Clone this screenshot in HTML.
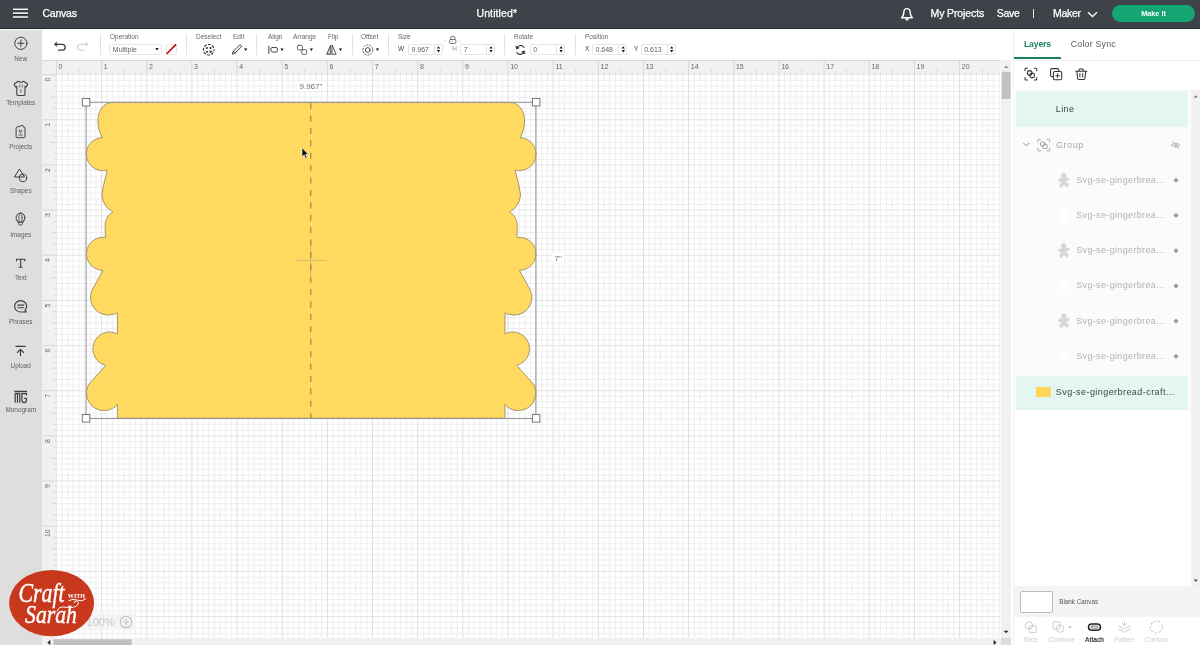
<!DOCTYPE html>
<html>
<head>
<meta charset="utf-8">
<title>Canvas</title>
<style>
*{box-sizing:border-box;margin:0;padding:0}
html,body{width:1200px;height:645px;overflow:hidden;background:#fff;font-family:"Liberation Sans",sans-serif;}
body{position:relative}
body>*{will-change:transform}
.abs{position:absolute}
#topbar{z-index:5;position:absolute;left:0;top:0;width:1200px;height:29px;background:#3e434a;color:#fff;font-size:10.500px;border-bottom:1px solid #272a2f}
#topbar .t{position:absolute;top:7px;line-height:13px;white-space:nowrap;-webkit-text-stroke:.25px #fff}
#sidebar{position:absolute;left:0;top:28px;width:41.700px;height:617px;background:#dedede}
.sb{position:absolute;left:0;width:41.500px;text-align:center;font-size:6.400px;color:#606060;line-height:8px;white-space:nowrap}
.sbi{position:absolute;left:13px;width:15px;height:15px}
#toolbar{position:absolute;left:42px;top:28px;width:971px;height:32px;background:#fff}
.tl{position:absolute;top:5px;font-size:6.5px;line-height:8px;color:#666;white-space:nowrap}
.sep{position:absolute;top:6px;width:1px;height:21px;background:#e2e2e2}
.inp{position:absolute;top:15.5px;height:11px;border:1px solid #e6e6e6;border-radius:2px;background:#fff;font-size:7px;line-height:9px;color:#5e5e5e;padding-left:2.500px;white-space:nowrap}
.lt{position:absolute;top:17px;font-size:6.5px;line-height:8px;color:#555}

.car{position:absolute;top:20.500px;width:0;height:0;border-left:1.700px solid transparent;border-right:1.700px solid transparent;border-top:2.300px solid #111}
.spl{position:absolute;right:7px;top:0;width:1px;height:100%;background:#e6e6e6}
.spu{position:absolute;right:2.300px;top:2px;width:0;height:0;border-left:1.700px solid transparent;border-right:1.700px solid transparent;border-bottom:2.200px solid #111}
.spd{position:absolute;right:2.300px;top:5.800px;width:0;height:0;border-left:1.700px solid transparent;border-right:1.700px solid transparent;border-top:2.200px solid #111}
#canvas{position:absolute;left:56px;top:74px;width:944px;height:558px;background:#fff;overflow:hidden}
#rulerT{position:absolute;left:42px;top:60px;width:958px;height:14px;background:#f1f1f1;overflow:hidden}
#rulerL{position:absolute;left:42px;top:74px;width:14px;height:558px;background:#f1f1f1;overflow:hidden}
#vscroll{position:absolute;left:1000.500px;top:60px;width:10.300px;height:578px;background:#f1f1f1}
#hscroll{position:absolute;left:42px;top:638px;width:958.500px;height:7px;background:#f1f1f1}
#panel{position:absolute;left:1013px;top:28px;width:187px;height:617px;background:#fff}
</style>
</head>
<body>
<div id="topbar">
<svg class="abs" style="left:12px;top:7.400px" width="17" height="13" viewBox="0 0 17 13"><g fill="#1c1e21"><rect x="1" y="2.6" width="15" height="1.2"/><rect x="1" y="6.4" width="15" height="1.2"/><rect x="1" y="10.3" width="15" height="1.2"/></g><g fill="#fff"><rect x="1" y="1.6" width="15" height="1.5"/><rect x="1" y="5.4" width="15" height="1.5"/><rect x="1" y="9.3" width="15" height="1.5"/></g></svg>
<span class="t" id="tcanvas" style="left:42.5px;letter-spacing:-0.23px">Canvas</span>
<span class="t" id="tuntitled" style="left:476.5px;letter-spacing:0.1px">Untitled*</span>
<svg class="abs" style="left:900px;top:7px" width="14" height="15" viewBox="900 7 14 15"><path d="M907 8.600C904.800 8.600 903.800 10.700 903.800 12.800C903.800 14.900 903 16.400 901.600 17.700H912.400C911 16.400 910.200 14.900 910.200 12.800C910.200 10.700 909.200 8.600 907 8.600z" fill="none" stroke="#fff" stroke-width="1.450" stroke-linejoin="round"/><path d="M904.800 18.400h4.400l-1.300 1.900q-.9.800-1.800 0z" fill="#fff"/></svg>
<span class="t" id="tmyp" style="left:930.5px;letter-spacing:-0.11px">My Projects</span>
<span class="t" id="tsave" style="left:996.8px;letter-spacing:-0.3px">Save</span>
<div class="abs" style="left:1032.5px;top:9px;width:1px;height:9px;background:#e6e8ea"></div>
<span class="t" id="tmaker" style="left:1053px;letter-spacing:-0.3px">Maker</span>
<svg class="abs" style="left:1087px;top:11px" width="11" height="7" viewBox="0 0 11 7"><path d="M1 1.200l4.500 4.300L10 1.200" fill="none" stroke="#fff" stroke-width="1.300"/></svg>
<div class="abs" id="makeit" style="left:1112px;top:5px;width:83px;height:17px;border-radius:9px;background:#14a672;color:#fff;font-weight:bold;font-size:7.300px;line-height:17px;text-align:center;padding-left:0">Make It</div>
</div>
<div id="sidebar"><div class="abs" style="left:0;top:1px;width:41.700px;height:2px;background:linear-gradient(#f2f2f2,#e6e6e6)"></div><svg class="abs" style="left:0;top:-28px" width="42" height="645" viewBox="0 0 42 645" fill="none" stroke="#3f3f3f" stroke-width="1" stroke-linecap="round" stroke-linejoin="round">
<circle cx="20.900" cy="43.300" r="6.100"/><path d="M17.800 43.300h6.200M20.900 40.200v6.200"/>
<path d="M18.200 81.300L14.500 83.800q-.5.400-.2.900l1.100 1.900q.3.400.7.200l.7-.4V94.300q0 1.200 1.200 1.200h5.800q1.200 0 1.200-1.200V86.400l.7.400q.4.200.7-.2l1.100-1.900q.3-.5-.2-.9L23.600 81.300q-2.700 2-5.400 0z" stroke-width="1.100"/><path d="M19.600 85v2M22.200 85v2M20.900 89.500v3" stroke-width=".7"/>
<path d="M16.100 128.200q0-1 1-1.200l5.300-1.500q.9-.2.900.800v.8h.7q1 0 1 1v8.600q0 1-1 1h-6.900q-1 0-1-1z"/><path d="M20.500 132.800q-2.300-1.500-1.300-2.500.8-.6 1.300.3.500-.9 1.300-.3 1 1-1.300 2.500zM18.800 135h3.500" stroke-width=".8"/>
<path d="M19.300 169.300L14.500 177h9.600z"/><circle cx="22.900" cy="177.900" r="3.800"/>
<ellipse cx="20.500" cy="217.700" rx="4.400" ry="4.700"/><ellipse cx="20.500" cy="217.700" rx="1.700" ry="4.700" stroke-width=".8"/><path d="M17 220.700l2.300 4.300h2.400l2.300-4.300M19.300 222.500h2.400" stroke-width=".8"/>
<path d="M16.500 261.200v-1.900h8.300v1.900M20.650 259.300v7.800M18.600 267.200h4.100" stroke-width="1.100" stroke-linecap="butt"/>
<path d="M26.600 306.300a6 5.700 0 1 0-6 5.700h5.800l-1.500-1.600a5.700 5.700 0 0 0 1.700-4.100z" stroke-width="1.100"/><path d="M17.800 305.100h5.900M17.800 307.800h5.900" stroke-width="1.100"/>
<path d="M15.900 346.400h9.300M20.500 349.600v6.200M17.400 352.500l3.100-3.100 3.100 3.100" stroke-width="1.100"/>
<path d="M14.400 391.500h12.600" stroke-width="1.500" stroke-linecap="butt"/><path d="M15.200 402.800V393.700h4.600V402.800M17.500 393.700v9.100" stroke-width="1.200" stroke-linecap="butt"/><path d="M26.500 395.600v-1.900h-4.600V399.800a2.300 2.900 0 0 0 4.600 0V398.300h-2.300" stroke-width="1.200" stroke-linecap="butt"/>
</svg><div class="sb" style="top:26.9px">New</div><div class="sb" style="top:70.9px">Templates</div><div class="sb" style="top:114.8px">Projects</div><div class="sb" style="top:158.7px">Shapes</div><div class="sb" style="top:202.6px">Images</div><div class="sb" style="top:246.4px">Text</div><div class="sb" style="top:290.3px">Phrases</div><div class="sb" style="top:334.2px">Upload</div><div class="sb" style="top:378.1px">Monogram</div></div>
<div id="toolbar"><div class="sep" style="left:57.6px"></div><span class="tl" style="left:68.0px">Operation</span><div class="inp" style="left:67.3px;width:53px">Multiple</div><div class="inp" style="left:123.6px;width:11.400px;padding:0"></div><div class="sep" style="left:144.0px"></div><span class="tl" style="left:154.0px">Deselect</span><span class="tl" style="left:191.0px">Edit</span><div class="sep" style="left:214.4px"></div><span class="tl" style="left:226.0px">Align</span><span class="tl" style="left:251.0px">Arrange</span><span class="tl" style="left:286.0px">Flip</span><div class="sep" style="left:309.7px"></div><span class="tl" style="left:319.0px">Offset</span><div class="sep" style="left:346.0px"></div><span class="tl" style="left:356.0px">Size</span><span class="lt" style="left:356.0px;color:#444">W</span><div class="inp" style="left:366.0px;width:34.7px">9.967<i class="spl"></i></div><span class="lt" style="left:410.2px;color:#9a9a9a">H</span><div class="inp" style="left:418.2px;width:35.0px">7<i class="spl"></i></div><div class="sep" style="left:462.4px"></div><span class="tl" style="left:472.0px">Rotate</span><div class="inp" style="left:487.8px;width:35.7px">0<i class="spl"></i></div><div class="sep" style="left:533.0px"></div><span class="tl" style="left:543.0px">Position</span><span class="lt" style="left:543.0px;color:#444">X</span><div class="inp" style="left:550.0px;width:35.3px">0.648<i class="spl"></i></div><span class="lt" style="left:592.0px;color:#444">Y</span><div class="inp" style="left:598.7px;width:35.0px">0.613<i class="spl"></i></div><svg class="abs" style="left:0;top:0" width="971" height="32" viewBox="42 28 971 32" fill="none" stroke-linecap="round" stroke-linejoin="round">
<g stroke="#3c3c3c" stroke-width="1.250"><path d="M56 44.300h6.300a2.900 2.900 0 0 1 0 5.800h-4.300" stroke-linecap="butt"/><path d="M56.700 42l-2.700 2.300 2.700 2.300z" fill="#3c3c3c" stroke-width=".3"/></g>
<g stroke="#d6d6d6" stroke-width="1.250"><path d="M86.600 44.300h-6.300a2.900 2.900 0 0 0 0 5.800h4.300" stroke-linecap="butt"/><path d="M85.900 42l2.700 2.300-2.700 2.300z" fill="#d6d6d6" stroke-width=".3"/></g>
<path d="M167 53.500l8.600-8.600" stroke="#c30d12" stroke-width="1.700"/>
<g stroke="#2b2b2b">
<circle cx="208.700" cy="49.700" r="5.300" stroke-width="1.050" stroke-dasharray="2.100 2.060" stroke-dashoffset="1"/>
<g fill="#2b2b2b" stroke="none"><circle cx="206.900" cy="48" r="1.050"/><circle cx="210.500" cy="48" r="1.050"/><circle cx="206.900" cy="51.700" r="1.050"/><path d="M209.700 50.300l3 1.500-3 1.500z"/></g>
<path d="M232.500 53.800l.8-2.600 6.200-6q1-.6 1.700.2.700.9-.1 1.700l-6.200 6zM233.300 51.200l1.600 1.800" stroke-width=".9"/>
<path d="M268.800 46.200v7.400" stroke-width="1" stroke="#444"/><rect x="270.900" y="47.500" width="6.500" height="4.500" rx="1.400" stroke-width="1" stroke="#444"/>
<rect x="297.500" y="45.300" width="4.800" height="4.600" rx=".9" stroke-width=".9" stroke="#555"/><rect x="301.800" y="49.700" width="4.800" height="4.600" rx=".9" stroke-width=".9" stroke="#555"/>
<path d="M330.500 45.400l-3.800 8.900h3.800z" stroke-width=".9" stroke="#444" fill="#c9c9c9"/><path d="M332.300 45.400l3.800 8.900h-3.800z" stroke-width=".9" stroke="#444"/>
<circle cx="367.800" cy="50" r="2.400" stroke-width=".95" stroke="#444"/><circle cx="367.800" cy="50" r="5" stroke-width=".9" stroke="#555" stroke-dasharray="1.300 1.840"/>
<path d="M450.400 39.500v-1a2.300 2.300 0 0 1 4.600 0v1" stroke="#666" stroke-width=".9"/><rect x="449.600" y="39.500" width="6.200" height="4" rx="1" stroke="#666" stroke-width=".9" fill="#fff"/><circle cx="452.700" cy="41.500" r=".5" fill="#666" stroke="none"/>
<path d="M443.300 41h3.500M458.300 40.900h1.200q1 0 1 1v1.300" stroke="#ddd" stroke-width=".8"/>
<path d="M516.500 48.600a4.100 4.100 0 0 1 7.500-1.200M524.300 51.200a4.100 4.100 0 0 1-7.500 1.200" stroke-width="1.050"/><path d="M515.800 46.300l.8 2.600 2.400-.9zM525 53.500l-.8-2.600-2.400.9z" fill="#2b2b2b" stroke-width=".5"/>
</g><path d="M244.05 48.5h3.3L245.70 50.9zM280.35 48.5h3.3L282.00 50.9zM309.75 48.5h3.3L311.40 50.9zM338.85 48.5h3.3L340.50 50.9zM375.85 48.5h3.3L377.50 50.9zM155.35 48h3.3L157.00 50.4zM436.85 48.5h3.3L438.50 46.2zM436.85 50.1h3.3L438.50 52.4zM489.35 48.5h3.3L491.00 46.2zM489.35 50.1h3.3L491.00 52.4zM559.45 48.5h3.3L561.10 46.2zM559.45 50.1h3.3L561.10 52.4zM621.65 48.5h3.3L623.30 46.2zM621.65 50.1h3.3L623.30 52.4zM670.05 48.5h3.3L671.70 46.2zM670.05 50.1h3.3L671.70 52.4z" fill="#111" stroke="none"/></svg></div>
<svg id="grid" class="abs" style="left:56px;top:74px" width="944.500" height="564.200" viewBox="56 74 944.500 564.200"><path d="M62.05 74.6V638.2M67.69 74.6V638.2M73.33 74.6V638.2M78.98 74.6V638.2M84.62 74.6V638.2M90.27 74.6V638.2M95.91 74.6V638.2M107.20 74.6V638.2M112.85 74.6V638.2M118.50 74.6V638.2M124.14 74.6V638.2M129.78 74.6V638.2M135.43 74.6V638.2M141.07 74.6V638.2M152.36 74.6V638.2M158.01 74.6V638.2M163.66 74.6V638.2M169.30 74.6V638.2M174.94 74.6V638.2M180.59 74.6V638.2M186.23 74.6V638.2M197.53 74.6V638.2M203.17 74.6V638.2M208.81 74.6V638.2M214.46 74.6V638.2M220.10 74.6V638.2M225.75 74.6V638.2M231.39 74.6V638.2M242.69 74.6V638.2M248.33 74.6V638.2M253.97 74.6V638.2M259.62 74.6V638.2M265.26 74.6V638.2M270.91 74.6V638.2M276.55 74.6V638.2M287.84 74.6V638.2M293.49 74.6V638.2M299.13 74.6V638.2M304.78 74.6V638.2M310.42 74.6V638.2M316.07 74.6V638.2M321.71 74.6V638.2M333.00 74.6V638.2M338.65 74.6V638.2M344.29 74.6V638.2M349.94 74.6V638.2M355.58 74.6V638.2M361.23 74.6V638.2M366.87 74.6V638.2M378.16 74.6V638.2M383.81 74.6V638.2M389.45 74.6V638.2M395.10 74.6V638.2M400.74 74.6V638.2M406.39 74.6V638.2M412.03 74.6V638.2M423.32 74.6V638.2M428.97 74.6V638.2M434.61 74.6V638.2M440.26 74.6V638.2M445.90 74.6V638.2M451.55 74.6V638.2M457.19 74.6V638.2M468.48 74.6V638.2M474.13 74.6V638.2M479.77 74.6V638.2M485.42 74.6V638.2M491.06 74.6V638.2M496.71 74.6V638.2M502.35 74.6V638.2M513.64 74.6V638.2M519.29 74.6V638.2M524.93 74.6V638.2M530.58 74.6V638.2M536.23 74.6V638.2M541.87 74.6V638.2M547.51 74.6V638.2M558.80 74.6V638.2M564.45 74.6V638.2M570.09 74.6V638.2M575.74 74.6V638.2M581.38 74.6V638.2M587.03 74.6V638.2M592.67 74.6V638.2M603.96 74.6V638.2M609.61 74.6V638.2M615.25 74.6V638.2M620.90 74.6V638.2M626.54 74.6V638.2M632.19 74.6V638.2M637.83 74.6V638.2M649.12 74.6V638.2M654.77 74.6V638.2M660.41 74.6V638.2M666.06 74.6V638.2M671.70 74.6V638.2M677.35 74.6V638.2M682.99 74.6V638.2M694.28 74.6V638.2M699.93 74.6V638.2M705.57 74.6V638.2M711.22 74.6V638.2M716.86 74.6V638.2M722.51 74.6V638.2M728.15 74.6V638.2M739.44 74.6V638.2M745.09 74.6V638.2M750.73 74.6V638.2M756.38 74.6V638.2M762.02 74.6V638.2M767.67 74.6V638.2M773.31 74.6V638.2M784.60 74.6V638.2M790.25 74.6V638.2M795.89 74.6V638.2M801.54 74.6V638.2M807.18 74.6V638.2M812.83 74.6V638.2M818.47 74.6V638.2M829.76 74.6V638.2M835.41 74.6V638.2M841.05 74.6V638.2M846.70 74.6V638.2M852.34 74.6V638.2M857.99 74.6V638.2M863.63 74.6V638.2M874.92 74.6V638.2M880.57 74.6V638.2M886.21 74.6V638.2M891.86 74.6V638.2M897.50 74.6V638.2M903.15 74.6V638.2M908.79 74.6V638.2M920.08 74.6V638.2M925.73 74.6V638.2M931.37 74.6V638.2M937.02 74.6V638.2M942.66 74.6V638.2M948.31 74.6V638.2M953.95 74.6V638.2M965.24 74.6V638.2M970.89 74.6V638.2M976.53 74.6V638.2M982.18 74.6V638.2M987.82 74.6V638.2M993.47 74.6V638.2M999.11 74.6V638.2M56.4 80.24H1000.5M56.4 85.89H1000.5M56.4 91.53H1000.5M56.4 97.18H1000.5M56.4 102.82H1000.5M56.4 108.47H1000.5M56.4 114.11H1000.5M56.4 125.40H1000.5M56.4 131.05H1000.5M56.4 136.69H1000.5M56.4 142.34H1000.5M56.4 147.98H1000.5M56.4 153.63H1000.5M56.4 159.27H1000.5M56.4 170.56H1000.5M56.4 176.21H1000.5M56.4 181.85H1000.5M56.4 187.50H1000.5M56.4 193.14H1000.5M56.4 198.79H1000.5M56.4 204.43H1000.5M56.4 215.72H1000.5M56.4 221.37H1000.5M56.4 227.01H1000.5M56.4 232.66H1000.5M56.4 238.30H1000.5M56.4 243.95H1000.5M56.4 249.59H1000.5M56.4 260.88H1000.5M56.4 266.53H1000.5M56.4 272.17H1000.5M56.4 277.82H1000.5M56.4 283.46H1000.5M56.4 289.11H1000.5M56.4 294.75H1000.5M56.4 306.04H1000.5M56.4 311.69H1000.5M56.4 317.33H1000.5M56.4 322.98H1000.5M56.4 328.62H1000.5M56.4 334.27H1000.5M56.4 339.91H1000.5M56.4 351.20H1000.5M56.4 356.85H1000.5M56.4 362.50H1000.5M56.4 368.14H1000.5M56.4 373.78H1000.5M56.4 379.43H1000.5M56.4 385.07H1000.5M56.4 396.37H1000.5M56.4 402.01H1000.5M56.4 407.65H1000.5M56.4 413.30H1000.5M56.4 418.94H1000.5M56.4 424.59H1000.5M56.4 430.24H1000.5M56.4 441.52H1000.5M56.4 447.17H1000.5M56.4 452.81H1000.5M56.4 458.46H1000.5M56.4 464.11H1000.5M56.4 469.75H1000.5M56.4 475.39H1000.5M56.4 486.68H1000.5M56.4 492.33H1000.5M56.4 497.97H1000.5M56.4 503.62H1000.5M56.4 509.26H1000.5M56.4 514.91H1000.5M56.4 520.55H1000.5M56.4 531.84H1000.5M56.4 537.49H1000.5M56.4 543.13H1000.5M56.4 548.78H1000.5M56.4 554.42H1000.5M56.4 560.07H1000.5M56.4 565.71H1000.5M56.4 577.00H1000.5M56.4 582.65H1000.5M56.4 588.29H1000.5M56.4 593.94H1000.5M56.4 599.59H1000.5M56.4 605.23H1000.5M56.4 610.88H1000.5M56.4 622.16H1000.5M56.4 627.81H1000.5M56.4 633.45H1000.5" stroke="#eeeeee" stroke-width="1" fill="none"/><path d="M56.4 74.60H1000.5M56.4 119.76H1000.5M56.4 164.92H1000.5M56.4 210.08H1000.5M56.4 255.24H1000.5M56.4 300.40H1000.5M56.4 345.56H1000.5M56.4 390.72H1000.5M56.4 435.88H1000.5M56.4 481.04H1000.5M56.4 526.20H1000.5M56.4 571.36H1000.5M56.4 616.52H1000.5" stroke="#e5e5e5" stroke-width="1" fill="none"/><path d="M56.40 74.6V638.2M101.56 74.6V638.2M146.72 74.6V638.2M191.88 74.6V638.2M237.04 74.6V638.2M282.20 74.6V638.2M327.36 74.6V638.2M372.52 74.6V638.2M417.68 74.6V638.2M462.84 74.6V638.2M508.00 74.6V638.2M553.16 74.6V638.2M598.32 74.6V638.2M643.48 74.6V638.2M688.64 74.6V638.2M733.80 74.6V638.2M778.96 74.6V638.2M824.12 74.6V638.2M869.28 74.6V638.2M914.44 74.6V638.2M959.60 74.6V638.2" stroke="#e0e0e0" stroke-width="1" fill="none"/></svg>
<svg id="rulers" class="abs" style="left:42px;top:60px" width="958.500" height="578.200" viewBox="42 60 958.500 578.200"><path d="M42 60H1000.5V74.6H56.4V638.2H42z" fill="#f1f1f1"/><path d="M42 60.400H1000.5" stroke="#d3d3d3" stroke-width="1"/><path d="M56.40 60.5V74.6M62.05 72.900V74.6M67.69 71.600V74.6M73.33 72.900V74.6M78.98 69.600V74.6M84.62 72.900V74.6M90.27 71.600V74.6M95.91 72.900V74.6M101.56 60.5V74.6M107.20 72.900V74.6M112.85 71.600V74.6M118.50 72.900V74.6M124.14 69.600V74.6M129.78 72.900V74.6M135.43 71.600V74.6M141.07 72.900V74.6M146.72 60.5V74.6M152.36 72.900V74.6M158.01 71.600V74.6M163.66 72.900V74.6M169.30 69.600V74.6M174.94 72.900V74.6M180.59 71.600V74.6M186.23 72.900V74.6M191.88 60.5V74.6M197.53 72.900V74.6M203.17 71.600V74.6M208.81 72.900V74.6M214.46 69.600V74.6M220.10 72.900V74.6M225.75 71.600V74.6M231.39 72.900V74.6M237.04 60.5V74.6M242.69 72.900V74.6M248.33 71.600V74.6M253.97 72.900V74.6M259.62 69.600V74.6M265.26 72.900V74.6M270.91 71.600V74.6M276.55 72.900V74.6M282.20 60.5V74.6M287.84 72.900V74.6M293.49 71.600V74.6M299.13 72.900V74.6M304.78 69.600V74.6M310.42 72.900V74.6M316.07 71.600V74.6M321.71 72.900V74.6M327.36 60.5V74.6M333.00 72.900V74.6M338.65 71.600V74.6M344.29 72.900V74.6M349.94 69.600V74.6M355.58 72.900V74.6M361.23 71.600V74.6M366.87 72.900V74.6M372.52 60.5V74.6M378.16 72.900V74.6M383.81 71.600V74.6M389.45 72.900V74.6M395.10 69.600V74.6M400.74 72.900V74.6M406.39 71.600V74.6M412.03 72.900V74.6M417.68 60.5V74.6M423.32 72.900V74.6M428.97 71.600V74.6M434.61 72.900V74.6M440.26 69.600V74.6M445.90 72.900V74.6M451.55 71.600V74.6M457.19 72.900V74.6M462.84 60.5V74.6M468.48 72.900V74.6M474.13 71.600V74.6M479.77 72.900V74.6M485.42 69.600V74.6M491.06 72.900V74.6M496.71 71.600V74.6M502.35 72.900V74.6M508.00 60.5V74.6M513.64 72.900V74.6M519.29 71.600V74.6M524.93 72.900V74.6M530.58 69.600V74.6M536.23 72.900V74.6M541.87 71.600V74.6M547.51 72.900V74.6M553.16 60.5V74.6M558.80 72.900V74.6M564.45 71.600V74.6M570.09 72.900V74.6M575.74 69.600V74.6M581.38 72.900V74.6M587.03 71.600V74.6M592.67 72.900V74.6M598.32 60.5V74.6M603.96 72.900V74.6M609.61 71.600V74.6M615.25 72.900V74.6M620.90 69.600V74.6M626.54 72.900V74.6M632.19 71.600V74.6M637.83 72.900V74.6M643.48 60.5V74.6M649.12 72.900V74.6M654.77 71.600V74.6M660.41 72.900V74.6M666.06 69.600V74.6M671.70 72.900V74.6M677.35 71.600V74.6M682.99 72.900V74.6M688.64 60.5V74.6M694.28 72.900V74.6M699.93 71.600V74.6M705.57 72.900V74.6M711.22 69.600V74.6M716.86 72.900V74.6M722.51 71.600V74.6M728.15 72.900V74.6M733.80 60.5V74.6M739.44 72.900V74.6M745.09 71.600V74.6M750.73 72.900V74.6M756.38 69.600V74.6M762.02 72.900V74.6M767.67 71.600V74.6M773.31 72.900V74.6M778.96 60.5V74.6M784.60 72.900V74.6M790.25 71.600V74.6M795.89 72.900V74.6M801.54 69.600V74.6M807.18 72.900V74.6M812.83 71.600V74.6M818.47 72.900V74.6M824.12 60.5V74.6M829.76 72.900V74.6M835.41 71.600V74.6M841.05 72.900V74.6M846.70 69.600V74.6M852.34 72.900V74.6M857.99 71.600V74.6M863.63 72.900V74.6M869.28 60.5V74.6M874.92 72.900V74.6M880.57 71.600V74.6M886.21 72.900V74.6M891.86 69.600V74.6M897.50 72.900V74.6M903.15 71.600V74.6M908.79 72.900V74.6M914.44 60.5V74.6M920.08 72.900V74.6M925.73 71.600V74.6M931.37 72.900V74.6M937.02 69.600V74.6M942.66 72.900V74.6M948.31 71.600V74.6M953.95 72.900V74.6M959.60 60.5V74.6M965.24 72.900V74.6M970.89 71.600V74.6M976.53 72.900V74.6M982.18 69.600V74.6M987.82 72.900V74.6M993.47 71.600V74.6M999.11 72.900V74.6M42.5 74.60H56.4M54.700 80.24H56.4M53.400 85.89H56.4M54.700 91.53H56.4M51.400 97.18H56.4M54.700 102.82H56.4M53.400 108.47H56.4M54.700 114.11H56.4M42.5 119.76H56.4M54.700 125.40H56.4M53.400 131.05H56.4M54.700 136.69H56.4M51.400 142.34H56.4M54.700 147.98H56.4M53.400 153.63H56.4M54.700 159.27H56.4M42.5 164.92H56.4M54.700 170.56H56.4M53.400 176.21H56.4M54.700 181.85H56.4M51.400 187.50H56.4M54.700 193.14H56.4M53.400 198.79H56.4M54.700 204.43H56.4M42.5 210.08H56.4M54.700 215.72H56.4M53.400 221.37H56.4M54.700 227.01H56.4M51.400 232.66H56.4M54.700 238.30H56.4M53.400 243.95H56.4M54.700 249.59H56.4M42.5 255.24H56.4M54.700 260.88H56.4M53.400 266.53H56.4M54.700 272.17H56.4M51.400 277.82H56.4M54.700 283.46H56.4M53.400 289.11H56.4M54.700 294.75H56.4M42.5 300.40H56.4M54.700 306.04H56.4M53.400 311.69H56.4M54.700 317.33H56.4M51.400 322.98H56.4M54.700 328.62H56.4M53.400 334.27H56.4M54.700 339.91H56.4M42.5 345.56H56.4M54.700 351.20H56.4M53.400 356.85H56.4M54.700 362.50H56.4M51.400 368.14H56.4M54.700 373.78H56.4M53.400 379.43H56.4M54.700 385.07H56.4M42.5 390.72H56.4M54.700 396.37H56.4M53.400 402.01H56.4M54.700 407.65H56.4M51.400 413.30H56.4M54.700 418.94H56.4M53.400 424.59H56.4M54.700 430.24H56.4M42.5 435.88H56.4M54.700 441.52H56.4M53.400 447.17H56.4M54.700 452.81H56.4M51.400 458.46H56.4M54.700 464.11H56.4M53.400 469.75H56.4M54.700 475.39H56.4M42.5 481.04H56.4M54.700 486.68H56.4M53.400 492.33H56.4M54.700 497.97H56.4M51.400 503.62H56.4M54.700 509.26H56.4M53.400 514.91H56.4M54.700 520.55H56.4M42.5 526.20H56.4M54.700 531.84H56.4M53.400 537.49H56.4M54.700 543.13H56.4M51.400 548.78H56.4M54.700 554.42H56.4M53.400 560.07H56.4M54.700 565.71H56.4M42.5 571.36H56.4M54.700 577.00H56.4M53.400 582.65H56.4M54.700 588.29H56.4M51.400 593.94H56.4M54.700 599.59H56.4M53.400 605.23H56.4M54.700 610.88H56.4M42.5 616.52H56.4M54.700 622.16H56.4M53.400 627.81H56.4M54.700 633.45H56.4" stroke="#d8d8d8" stroke-width="1" fill="none"/><g font-family="Liberation Sans, sans-serif" font-size="7" fill="#666"><text x="58.6" y="68.700">0</text><text x="103.8" y="68.700">1</text><text x="148.9" y="68.700">2</text><text x="194.1" y="68.700">3</text><text x="239.2" y="68.700">4</text><text x="284.4" y="68.700">5</text><text x="329.6" y="68.700">6</text><text x="374.7" y="68.700">7</text><text x="419.9" y="68.700">8</text><text x="465.0" y="68.700">9</text><text x="510.2" y="68.700">10</text><text x="555.4" y="68.700">11</text><text x="600.5" y="68.700">12</text><text x="645.7" y="68.700">13</text><text x="690.8" y="68.700">14</text><text x="736.0" y="68.700">15</text><text x="781.2" y="68.700">16</text><text x="826.3" y="68.700">17</text><text x="871.5" y="68.700">18</text><text x="916.6" y="68.700">19</text><text x="961.8" y="68.700">20</text><text transform="translate(50.100 81.6) rotate(-90)">0</text><text transform="translate(50.100 126.8) rotate(-90)">1</text><text transform="translate(50.100 171.9) rotate(-90)">2</text><text transform="translate(50.100 217.1) rotate(-90)">3</text><text transform="translate(50.100 262.2) rotate(-90)">4</text><text transform="translate(50.100 307.4) rotate(-90)">5</text><text transform="translate(50.100 352.6) rotate(-90)">6</text><text transform="translate(50.100 397.7) rotate(-90)">7</text><text transform="translate(50.100 442.9) rotate(-90)">8</text><text transform="translate(50.100 488.0) rotate(-90)">9</text><text transform="translate(50.100 537.1) rotate(-90)">10</text><text transform="translate(50.100 582.3) rotate(-90)">11</text><text transform="translate(50.100 627.4) rotate(-90)">12</text></g></svg>
<svg id="art" class="abs" style="left:42px;top:60px" width="958" height="572" viewBox="42 60 958 572">
<defs><path id="hf" d="M312 102.4H113 C103.5 102.4 97.9 110.5 97.9 121 C97.9 127.500 99.500 133 102.300 137.600 A16.500 16.500 0 1 0 107.200 170 L103 188 A19.200 19.200 0 0 0 112.800 211.800 C108 215 105.100 220 105.100 226 C105.100 230 105.300 234 105.500 237.500 A16.500 16.500 0 1 0 103 270.300 L91.900 290.500 A17.700 17.700 0 0 0 113.500 314.300 Q116 314.200 117.400 312.800 V333.800 A16.900 16.900 0 1 0 105.800 365.300 L88.400 384.800 A17.600 17.600 0 0 0 117.400 404.400 V418.300 H312"/></defs>
<g fill="#ffd960" stroke="none"><use href="#hf"/><use href="#hf" transform="translate(622.400 0) scale(-1 1)"/></g>
<g fill="none" stroke="#8f8460" stroke-width=".8"><use href="#hf"/><use href="#hf" transform="translate(622.400 0) scale(-1 1)"/></g>
<path d="M295.300 260.400H326.600M310.800 245V276" stroke="#c9b676" stroke-width=".8"/>
<path d="M310.800 103.100V418" stroke="#8b7b46" stroke-width="1" stroke-dasharray="6.100 6.300" fill="none"/>
<rect x="86.100" y="102.300" width="449.800" height="316.100" fill="none" stroke="#929292" stroke-width="1"/>
<g fill="#fff" stroke="#6a6a6a" stroke-width=".9"><rect x="82.300" y="98.500" width="7.500" height="7.500"/><rect x="532.400" y="98.500" width="7.500" height="7.500"/><rect x="82.300" y="414.600" width="7.500" height="7.500"/><rect x="532.400" y="414.600" width="7.500" height="7.500"/></g>
<rect x="297" y="81" width="27.500" height="10" fill="#fff" opacity=".85"/><rect x="552" y="252.500" width="12" height="10.500" fill="#fff" opacity=".85"/>
<g font-family="Liberation Sans, sans-serif" font-size="8" fill="#707070"><text x="299.500" y="88.900">9.967"</text><text x="554.500" y="260.600">7"</text></g>
<path d="M302 147.800v9.200l2.100-2 1.500 3.400 1.500-.7-1.500-3.300h2.900z" fill="#111" stroke="#fff" stroke-width=".6"/>
</svg>
<div id="vscroll"><svg class="abs" style="left:0;top:0" width="10.300" height="578" viewBox="1000.500 60 10.300 578"><path d="M1003.600 67.800l2.200-2.400 2.200 2.400z" fill="#8a8a8a"/><rect x="1001.300" y="71.700" width="8.800" height="27.200" fill="#c1c1c1"/><path d="M1003.200 630.800h4.800l-2.400 2.600z" fill="#222"/></svg></div>
<div id="hscroll"><svg class="abs" style="left:0;top:0" width="958.500" height="7" viewBox="42 638 958.500 7"><path d="M50.300 639.800v5.200l-2.900-2.300z" fill="#222"/><rect x="53.400" y="639.200" width="78.400" height="6" fill="#c1c1c1"/><path d="M993.600 639.800v5.200l2.900-2.300z" fill="#222"/></svg></div><div class="abs" style="left:1000.500px;top:638px;width:10.300px;height:7px;background:#dcdcdc"></div>
<svg id="logo" class="abs" style="left:0;top:560px" width="160" height="85" viewBox="0 560 160 85">
<rect x="56.500" y="612.800" width="79.500" height="17.400" rx="4" fill="#f4f4f4" opacity=".9"/>
<text x="86.600" y="626" font-family="Liberation Sans, sans-serif" font-size="11" fill="#c6c6c6">100%</text>
<g fill="none" stroke="#c2c2c2" stroke-width="1.200"><circle cx="126" cy="622" r="5.700"/><path d="M122.800 622h6.400M126 618.800v6.400"/></g>
<ellipse cx="51.600" cy="603.100" rx="42.500" ry="33.200" fill="#c8381c"/>
<g fill="#fff" stroke="#fff" stroke-width=".35" font-family="Liberation Serif, serif" font-style="italic">
<text transform="translate(18.500 601.800) scale(1 1.240)" font-size="21.500" textLength="46" lengthAdjust="spacingAndGlyphs">Craft</text>
<text transform="translate(25 623.300) scale(1 1.220)" font-size="21" textLength="52" lengthAdjust="spacingAndGlyphs">Sarah</text>
</g>
<text x="67.800" y="597.600" font-family="Liberation Serif, serif" font-weight="bold" font-size="6.100" fill="#fff">WITH</text>
<path d="M68.500 600.800q4.500-2.600 9-.6t8.500-1.600" fill="none" stroke="#fff" stroke-width="1"/>
<path d="M57 611.500q1.500-5.500 8-4.300q8 1.500 12-1.700q3-3.300-.5-4.300q-2.600-.3-2.200 1.900" fill="none" stroke="#fff" stroke-width=".9"/>
</svg>
<div id="panel"><div class="abs" style="left:0;top:0;width:1px;height:617px;background:#f0f0f0"></div><div class="abs" style="left:0;top:31.500px;width:187px;height:1px;background:#f0f0f0"></div><div class="abs" style="left:.8px;top:28.800px;width:47px;height:2.400px;background:#1a7f5c"></div><span class="abs" style="left:10.9px;top:10.600px;font-size:8.500px;line-height:11px;font-weight:bold;color:#1f7f60;letter-spacing:-.05px">Layers</span><span class="abs" style="left:57.8px;top:10.600px;font-size:8.800px;line-height:11px;color:#5a5a5a;letter-spacing:.2px;white-space:nowrap">Color Sync</span><div class="abs" style="left:0;top:62.4px;width:178px;height:319.7px;background:#fbfbfb;border-top:1px solid #f0f0f0"></div><div class="abs" style="left:178.2px;top:62.4px;width:9px;height:495.4px;background:#f1f1f1"></div><div class="abs" style="left:3.0px;top:64.3px;width:172.200px;height:34.300px;background:#e3f6f0"></div><div class="abs" style="left:3.0px;top:347.9px;width:172.200px;height:34.200px;background:#e3f6f0"></div><span class="abs" style="left:42.8px;top:75.900px;font-size:9px;line-height:11px;color:#444;letter-spacing:0.4px;white-space:nowrap">Line</span><span class="abs" style="left:43.0px;top:111.5px;font-size:9px;line-height:11px;color:#a8a8a8;letter-spacing:0.55px;white-space:nowrap">Group</span><span class="abs" style="left:63.2px;top:146.70px;font-size:9px;line-height:11px;color:#b2b2b2;letter-spacing:0.35px;white-space:nowrap">Svg-se-gingerbrea...</span><span class="abs" style="left:63.2px;top:181.90px;font-size:9px;line-height:11px;color:#b2b2b2;letter-spacing:0.35px;white-space:nowrap">Svg-se-gingerbrea...</span><span class="abs" style="left:63.2px;top:217.15px;font-size:9px;line-height:11px;color:#b2b2b2;letter-spacing:0.35px;white-space:nowrap">Svg-se-gingerbrea...</span><span class="abs" style="left:63.2px;top:252.40px;font-size:9px;line-height:11px;color:#b2b2b2;letter-spacing:0.35px;white-space:nowrap">Svg-se-gingerbrea...</span><span class="abs" style="left:63.2px;top:287.60px;font-size:9px;line-height:11px;color:#b2b2b2;letter-spacing:0.35px;white-space:nowrap">Svg-se-gingerbrea...</span><span class="abs" style="left:63.2px;top:322.80px;font-size:9px;line-height:11px;color:#b2b2b2;letter-spacing:0.35px;white-space:nowrap">Svg-se-gingerbrea...</span><span class="abs" style="left:42.8px;top:358.7px;font-size:9px;line-height:11px;color:#444;letter-spacing:0.44px;white-space:nowrap">Svg-se-gingerbread-craft...</span><div class="abs" style="left:23.3px;top:359.0px;width:14.900px;height:10.300px;background:#ffd65a"></div><div class="abs" style="left:0;top:557.8px;width:187px;height:31.700px;background:#f4f4f4"></div><div class="abs" style="left:6.7px;top:562.8px;width:33.300px;height:22.500px;background:#fff;border:1px solid #b8b8b8;border-radius:2px"></div><span class="abs" style="left:46.2px;top:570.0px;font-size:6.300px;line-height:8px;color:#555;white-space:nowrap">Blank Canvas</span><span class="abs" style="left:-2.5px;top:608.0px;width:40px;text-align:center;font-size:6.600px;line-height:8px;color:#cfcfcf;letter-spacing:.05px">Slice</span><span class="abs" style="left:28.5px;top:608.0px;width:40px;text-align:center;font-size:6.600px;line-height:8px;color:#cfcfcf;letter-spacing:.05px">Combine</span><span class="abs" style="left:61.6px;top:608.0px;width:40px;text-align:center;font-size:6.600px;line-height:8px;color:#333;letter-spacing:.05px;-webkit-text-stroke:.2px #333">Attach</span><span class="abs" style="left:91.2px;top:608.0px;width:40px;text-align:center;font-size:6.600px;line-height:8px;color:#cfcfcf;letter-spacing:.05px">Flatten</span><span class="abs" style="left:123.5px;top:608.0px;width:40px;text-align:center;font-size:6.600px;line-height:8px;color:#cfcfcf;letter-spacing:.05px">Contour</span><svg class="abs" style="left:0;top:0" width="187" height="617" viewBox="1013 28 187 617"><g fill="none" stroke="#333" stroke-width="1.05" stroke-linecap="round"><path d="M1025.00 70.80V69.30q0-1.0 1.0-1.0H1027.50M1034.30 68.30H1035.80q1.0 0 1.0 1.0V70.80M1036.80 77.40V78.90q0 1.0-1.0 1.0H1034.30M1027.50 79.90H1026.00q-1.0 0-1.0-1.0V77.40"/><circle cx="1029.7" cy="72.9" r="2.300"/><rect x="1030.0" y="73.3" width="4.400" height="4.300" rx="1.300" fill="none"/></g><g fill="none" stroke="#333" stroke-width="1.050"><rect x="1050.600" y="68.600" width="8.200" height="8.200" rx="1.500"/><rect x="1053.400" y="71.500" width="8.300" height="8.300" rx="1.500" fill="#fff"/><path d="M1055.400 75.650h4.300M1057.550 73.500v4.300"/></g><g fill="none" stroke="#333" stroke-width="1.050" stroke-linecap="round" stroke-linejoin="round"><path d="M1075.700 71.200h11.200M1079 71v-1q0-1 1-1h2.400q1 0 1 1v1M1076.900 71.400l.7 6.900q.1 1.200 1.300 1.200h4.800q1.200 0 1.300-1.200l.7-6.900M1079.900 73.500v3.500M1082.700 73.500v3.500"/></g><path d="M1193.600 97.600l2.200-2.400 2.200 2.400z" fill="#777"/><path d="M1193.500 579.600h4.600l-2.300 2.500z" fill="#555"/><g stroke="#ffffff" fill="#ffffff" stroke-linecap="round"><circle cx="1063.7" cy="210.7" r="2.600" stroke="none"/><path d="M1059.8 215.2L1067.8 214.2" stroke-width="3.300"/><path d="M1063.7 213.0V217.8" stroke-width="4.400"/><path d="M1063.3 217.4L1061.1 220.7M1064.1 217.4L1067.0 220.3" stroke-width="3.500"/></g><g stroke="#ffffff" fill="#ffffff" stroke-linecap="round"><circle cx="1063.7" cy="280.9" r="2.600" stroke="none"/><path d="M1059.8 285.4L1067.8 284.4" stroke-width="3.300"/><path d="M1063.7 283.2V288.0" stroke-width="4.400"/><path d="M1063.3 287.6L1061.1 290.9M1064.1 287.6L1067.0 290.5" stroke-width="3.500"/></g><g stroke="#ffffff" fill="#ffffff" stroke-linecap="round"><circle cx="1063.7" cy="351.1" r="2.600" stroke="none"/><path d="M1059.8 355.6L1067.8 354.6" stroke-width="3.300"/><path d="M1063.7 353.4V358.2" stroke-width="4.400"/><path d="M1063.3 357.8L1061.1 361.1M1064.1 357.8L1067.0 360.7" stroke-width="3.500"/></g><path d="M1023.500 143l2.800 2.900 2.800-2.900" fill="none" stroke="#8a8a8a" stroke-width="1"/><g fill="none" stroke="#a0a0a0" stroke-width="1.0" stroke-linecap="round"><path d="M1037.90 141.80V140.30q0-1.0 1.0-1.0H1040.40M1047.20 139.30H1048.70q1.0 0 1.0 1.0V141.80M1049.70 148.40V149.90q0 1.0-1.0 1.0H1047.20M1040.40 150.90H1038.90q-1.0 0-1.0-1.0V148.40"/><circle cx="1042.6" cy="143.9" r="2.300"/><rect x="1042.9" y="144.3" width="4.400" height="4.300" rx="1.300" fill="none"/></g><g fill="none" stroke="#b0b0b0" stroke-width=".9" stroke-linecap="round"><path d="M1171.400 145.100q4.300-4.200 8.600 0q-4.300 4.200-8.600 0z"/><circle cx="1175.700" cy="145.100" r="1.200"/><path d="M1172.600 141.900l6.200 6.400"/></g><g stroke="#d6d6d6" fill="#d6d6d6" stroke-linecap="round"><circle cx="1063.7" cy="175.6" r="2.600" stroke="none"/><path d="M1059.8 180.1L1067.8 179.1" stroke-width="3.300"/><path d="M1063.7 177.9V182.7" stroke-width="4.400"/><path d="M1063.3 182.3L1061.1 185.6M1064.1 182.3L1067.0 185.2" stroke-width="3.500"/></g><path d="M1176 177.60l2.500 2.600-2.500 2.600-2.500-2.600z" fill="#9a9a9a"/><path d="M1176 212.80l2.500 2.600-2.500 2.600-2.500-2.600z" fill="#9a9a9a"/><g stroke="#d6d6d6" fill="#d6d6d6" stroke-linecap="round"><circle cx="1063.7" cy="245.8" r="2.600" stroke="none"/><path d="M1059.8 250.3L1067.8 249.3" stroke-width="3.300"/><path d="M1063.7 248.1V252.9" stroke-width="4.400"/><path d="M1063.3 252.5L1061.1 255.8M1064.1 252.5L1067.0 255.4" stroke-width="3.500"/></g><path d="M1176 248.05l2.500 2.600-2.500 2.600-2.500-2.600z" fill="#9a9a9a"/><path d="M1176 283.30l2.500 2.600-2.500 2.600-2.500-2.600z" fill="#9a9a9a"/><g stroke="#d6d6d6" fill="#d6d6d6" stroke-linecap="round"><circle cx="1063.7" cy="316.0" r="2.600" stroke="none"/><path d="M1059.8 320.5L1067.8 319.5" stroke-width="3.300"/><path d="M1063.7 318.3V323.1" stroke-width="4.400"/><path d="M1063.3 322.7L1061.1 326.0M1064.1 322.7L1067.0 325.6" stroke-width="3.500"/></g><path d="M1176 318.50l2.500 2.600-2.500 2.600-2.500-2.600z" fill="#9a9a9a"/><path d="M1176 353.70l2.500 2.600-2.500 2.600-2.500-2.600z" fill="#9a9a9a"/><g fill="none" stroke="#cccccc" stroke-width="1"><circle cx="1029" cy="625.400" r="3.700"/><rect x="1029.400" y="625.800" width="6.800" height="6.800" rx=".8"/></g><g fill="none" stroke="#cccccc" stroke-width="1"><rect x="1053" y="621.800" width="7" height="7" rx=".8"/><circle cx="1060" cy="628.600" r="3.700"/><path d="M1068.200 626h3.600l-1.800 2.400z" fill="#bdbdbd" stroke="none"/></g><g fill="none" stroke="#222" stroke-linecap="round"><rect x="1088.500" y="624" width="12" height="6.200" rx="3.100" stroke-width="1.500"/><path d="M1098.400 627.100h-6.300a1.200 1.200 0 0 1 0-2.400" stroke-width=".1" opacity="0"/><rect x="1091.200" y="626.100" width="6.800" height="2.100" rx="1" stroke-width=".8" stroke="#555"/></g><g fill="none" stroke="#cccccc" stroke-width="1" stroke-linecap="round" stroke-linejoin="round"><path d="M1124.400 621v4.300M1122.300 623.600l2.100 2 2.100-2M1118.800 625.600l5.600 3.400 5.600-3.400M1118.800 628.900l5.600 3.500 5.600-3.500"/></g><circle cx="1156.400" cy="627" r="6" fill="none" stroke="#cccccc" stroke-width="1.100" stroke-dasharray="2.600 1.600"/></svg></div>
</body>
</html>
